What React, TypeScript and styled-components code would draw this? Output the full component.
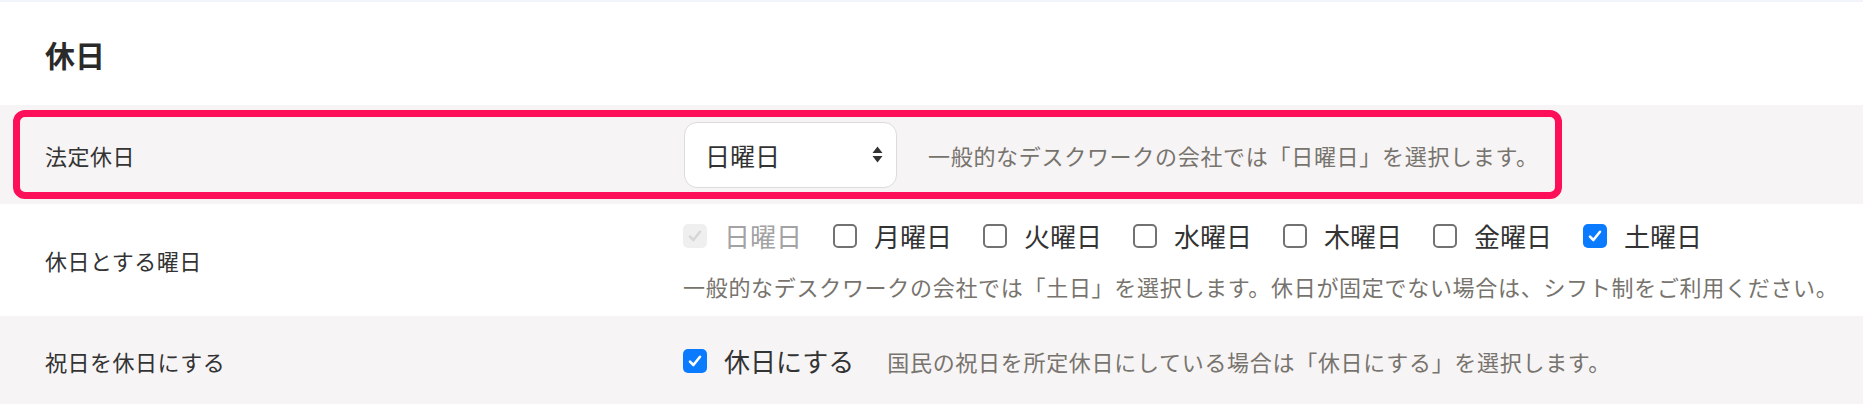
import React from "react";
import styled, { createGlobalStyle } from "styled-components";

const GlobalStyle = createGlobalStyle`
  body {
    margin: 0;
    background: #ffffff;
    font-family: "Noto Sans CJK JP", "Noto Sans", sans-serif;
    color: #333333;
  }
`;

const Page = styled.div`
  width: 1863px;
  border-top: 2px solid #f1f4f9;
`;

const TitleBar = styled.div`
  height: 103px;
  display: flex;
  align-items: center;
  padding-left: 45px;
`;

const Title = styled.h2`
  margin: 0;
  font-size: 30px;
  font-weight: 700;
  color: #2a2a2a;
`;

const Row = styled.div<{ $shade?: boolean; $height: number }>`
  position: relative;
  display: grid;
  grid-template-columns: 638px 1fr;
  align-items: center;
  height: ${(p) => p.$height}px;
  padding-left: 45px;
  background: ${(p) => (p.$shade ? "#f6f4f5" : "#ffffff")};
`;

const Label = styled.div`
  font-size: 22px;
  letter-spacing: 0.5px;
  color: #333333;
  line-height: 1;
`;

const Content = styled.div`
  display: flex;
  align-items: center;
`;

const Stack = styled.div`
  display: flex;
  flex-direction: column;
  gap: 26px;
`;

const Hint = styled.span`
  font-size: 22px;
  letter-spacing: 0.7px;
  color: #77736d;
  line-height: 1;
  white-space: nowrap;
`;

const Select = styled.div`
  box-sizing: border-box;
  width: 213px;
  height: 66px;
  margin-left: 1px;
  margin-right: 31px;
  padding: 0 13px 0 20px;
  display: flex;
  align-items: center;
  justify-content: space-between;
  background: #ffffff;
  border: 1px solid #dcdcdc;
  border-radius: 13px;
  font-size: 25px;
  color: #333333;
`;

const Highlight = styled.div`
  position: absolute;
  top: 5px;
  left: 13px;
  width: 1549px;
  height: 89px;
  box-sizing: border-box;
  border: 7px solid #fe0f5a;
  border-radius: 12px;
  pointer-events: none;
`;

const Checks = styled.div`
  display: flex;
  align-items: center;
  gap: 31px;
`;

const Option = styled.label<{ $disabled?: boolean }>`
  display: flex;
  align-items: center;
  gap: 17px;
  font-size: 26px;
  line-height: 1;
  color: ${(p) => (p.$disabled ? "#a3a3a3" : "#333333")};
`;

const Box = styled.span<{ $checked?: boolean; $disabled?: boolean }>`
  box-sizing: border-box;
  width: 24px;
  height: 24px;
  border-radius: 5px;
  display: flex;
  align-items: center;
  justify-content: center;
  background: ${(p) =>
    p.$disabled ? "#efefef" : p.$checked ? "#0a7aff" : "#ffffff"};
  border: ${(p) =>
    p.$disabled || p.$checked ? "none" : "2px solid #727272"};
`;

const Gap = styled.span`
  width: 33px;
  flex: none;
`;

function Check({ checked, disabled }: { checked?: boolean; disabled?: boolean }) {
  return (
    <Box $checked={checked} $disabled={disabled}>
      {checked && (
        <svg width="16" height="16" viewBox="0 0 16 16">
          <path
            d="M3 8.6 L6.4 12 L13 3.8"
            fill="none"
            stroke={disabled ? "#d6d6d6" : "#ffffff"}
            strokeWidth="2.6"
            strokeLinecap="round"
            strokeLinejoin="round"
          />
        </svg>
      )}
    </Box>
  );
}

function Arrows() {
  return (
    <svg width="11" height="17" viewBox="0 0 11 17">
      <path d="M5.5 0.5 L10.5 7 L0.5 7 Z" fill="#333333" />
      <path d="M5.5 16.5 L10.5 10 L0.5 10 Z" fill="#333333" />
    </svg>
  );
}

const days = [
  { name: "日曜日", checked: true, disabled: true },
  { name: "月曜日" },
  { name: "火曜日" },
  { name: "水曜日" },
  { name: "木曜日" },
  { name: "金曜日" },
  { name: "土曜日", checked: true },
];

export default function App() {
  return (
    <>
      <GlobalStyle />
      <Page>
        <TitleBar>
          <Title>休日</Title>
        </TitleBar>

        <Row $shade $height={99}>
          <Label>法定休日</Label>
          <Content>
            <Select>
              <span>日曜日</span>
              <Arrows />
            </Select>
            <Hint>一般的なデスクワークの会社では「日曜日」を選択します。</Hint>
          </Content>
          <Highlight />
        </Row>

        <Row $height={112}>
          <Label>休日とする曜日</Label>
          <Stack>
            <Checks>
              {days.map((d) => (
                <Option key={d.name} $disabled={d.disabled}>
                  <Check checked={d.checked} disabled={d.disabled} />
                  {d.name}
                </Option>
              ))}
            </Checks>
            <Hint>
              一般的なデスクワークの会社では「土日」を選択します。休日が固定でない場合は、シフト制をご利用ください。
            </Hint>
          </Stack>
        </Row>

        <Row $shade $height={90}>
          <Label>祝日を休日にする</Label>
          <Content>
            <Option>
              <Check checked />
              休日にする
            </Option>
            <Gap />
            <Hint>国民の祝日を所定休日にしている場合は「休日にする」を選択します。</Hint>
          </Content>
        </Row>
      </Page>
    </>
  );
}
